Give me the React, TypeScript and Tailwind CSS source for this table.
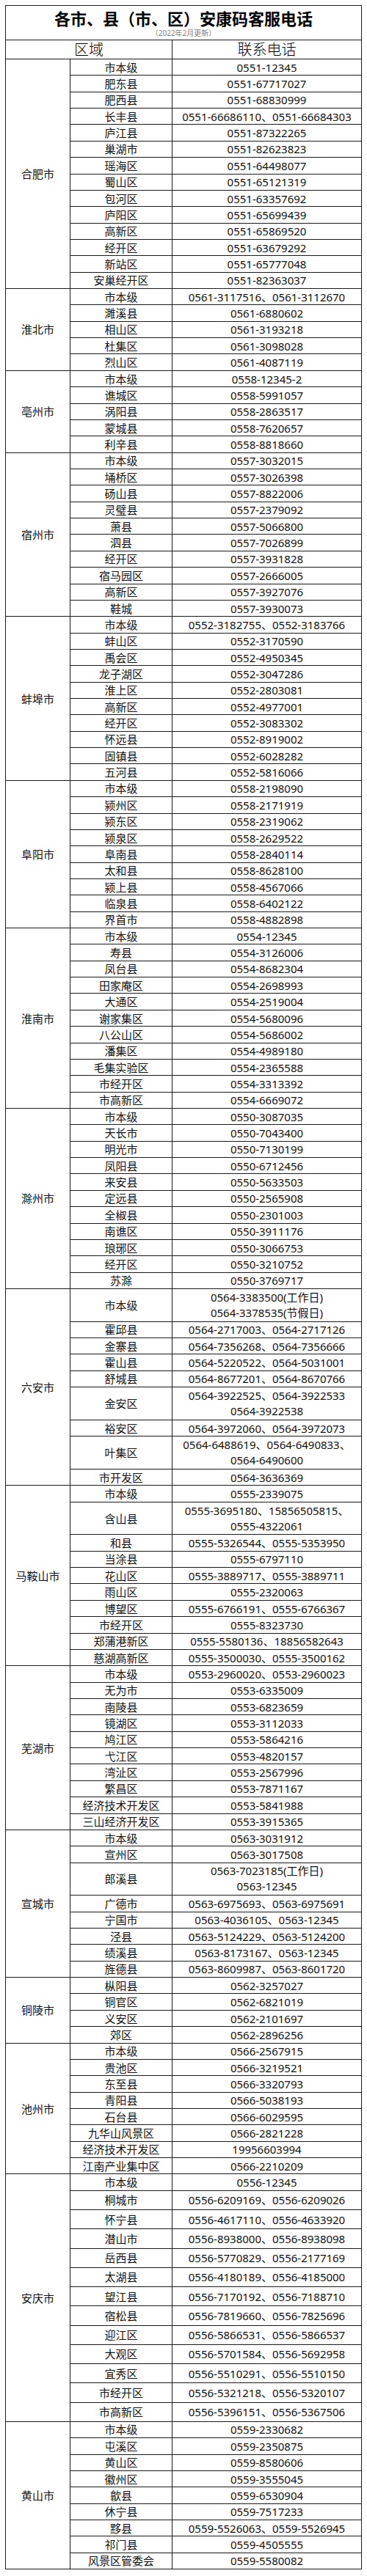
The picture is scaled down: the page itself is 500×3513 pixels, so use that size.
type Phone = string | string[];
type Row = [string, Phone];

interface Group {
  city: string;
  rows: Row[];
  // rows from this index on are drawn a bit taller (安庆 block)
  tallFrom?: number;
}

const GROUPS: Group[] = [
  {
    city: "合肥市",
    rows: [
      ["市本级", "0551-12345"],
      ["肥东县", "0551-67717027"],
      ["肥西县", "0551-68830999"],
      ["长丰县", "0551-66686110、0551-66684303"],
      ["庐江县", "0551-87322265"],
      ["巢湖市", "0551-82623823"],
      ["瑶海区", "0551-64498077"],
      ["蜀山区", "0551-65121319"],
      ["包河区", "0551-63357692"],
      ["庐阳区", "0551-65699439"],
      ["高新区", "0551-65869520"],
      ["经开区", "0551-63679292"],
      ["新站区", "0551-65777048"],
      ["安巢经开区", "0551-82363037"],
    ],
  },
  {
    city: "淮北市",
    rows: [
      ["市本级", "0561-3117516、0561-3112670"],
      ["濉溪县", "0561-6880602"],
      ["相山区", "0561-3193218"],
      ["杜集区", "0561-3098028"],
      ["烈山区", "0561-4087119"],
    ],
  },
  {
    city: "亳州市",
    rows: [
      ["市本级", "0558-12345-2"],
      ["谯城区", "0558-5991057"],
      ["涡阳县", "0558-2863517"],
      ["蒙城县", "0558-7620657"],
      ["利辛县", "0558-8818660"],
    ],
  },
  {
    city: "宿州市",
    rows: [
      ["市本级", "0557-3032015"],
      ["埇桥区", "0557-3026398"],
      ["砀山县", "0557-8822006"],
      ["灵璧县", "0557-2379092"],
      ["萧县", "0557-5066800"],
      ["泗县", "0557-7026899"],
      ["经开区", "0557-3931828"],
      ["宿马园区", "0557-2666005"],
      ["高新区", "0557-3927076"],
      ["鞋城", "0557-3930073"],
    ],
  },
  {
    city: "蚌埠市",
    rows: [
      ["市本级", "0552-3182755、0552-3183766"],
      ["蚌山区", "0552-3170590"],
      ["禹会区", "0552-4950345"],
      ["龙子湖区", "0552-3047286"],
      ["淮上区", "0552-2803081"],
      ["高新区", "0552-4977001"],
      ["经开区", "0552-3083302"],
      ["怀远县", "0552-8919002"],
      ["固镇县", "0552-6028282"],
      ["五河县", "0552-5816066"],
    ],
  },
  {
    city: "阜阳市",
    rows: [
      ["市本级", "0558-2198090"],
      ["颍州区", "0558-2171919"],
      ["颍东区", "0558-2319062"],
      ["颍泉区", "0558-2629522"],
      ["阜南县", "0558-2840114"],
      ["太和县", "0558-8628100"],
      ["颍上县", "0558-4567066"],
      ["临泉县", "0558-6402122"],
      ["界首市", "0558-4882898"],
    ],
  },
  {
    city: "淮南市",
    rows: [
      ["市本级", "0554-12345"],
      ["寿县", "0554-3126006"],
      ["凤台县", "0554-8682304"],
      ["田家庵区", "0554-2698993"],
      ["大通区", "0554-2519004"],
      ["谢家集区", "0554-5680096"],
      ["八公山区", "0554-5686002"],
      ["潘集区", "0554-4989180"],
      ["毛集实验区", "0554-2365588"],
      ["市经开区", "0554-3313392"],
      ["市高新区", "0554-6669072"],
    ],
  },
  {
    city: "滁州市",
    rows: [
      ["市本级", "0550-3087035"],
      ["天长市", "0550-7043400"],
      ["明光市", "0550-7130199"],
      ["凤阳县", "0550-6712456"],
      ["来安县", "0550-5633503"],
      ["定远县", "0550-2565908"],
      ["全椒县", "0550-2301003"],
      ["南谯区", "0550-3911176"],
      ["琅琊区", "0550-3066753"],
      ["经开区", "0550-3210752"],
      ["苏滁", "0550-3769717"],
    ],
  },
  {
    city: "六安市",
    rows: [
      ["市本级", ["0564-3383500(工作日)", "0564-3378535(节假日)"]],
      ["霍邱县", "0564-2717003、0564-2717126"],
      ["金寨县", "0564-7356268、0564-7356666"],
      ["霍山县", "0564-5220522、0564-5031001"],
      ["舒城县", "0564-8677201、0564-8670766"],
      ["金安区", ["0564-3922525、0564-3922533", "0564-3922538"]],
      ["裕安区", "0564-3972060、0564-3972073"],
      ["叶集区", ["0564-6488619、0564-6490833、", "0564-6490600"]],
      ["市开发区", "0564-3636369"],
    ],
  },
  {
    city: "马鞍山市",
    rows: [
      ["市本级", "0555-2339075"],
      ["含山县", ["0555-3695180、15856505815、", "0555-4322061"]],
      ["和县", "0555-5326544、0555-5353950"],
      ["当涂县", "0555-6797110"],
      ["花山区", "0555-3889717、0555-3889711"],
      ["雨山区", "0555-2320063"],
      ["博望区", "0555-6766191、0555-6766367"],
      ["市经开区", "0555-8323730"],
      ["郑蒲港新区", "0555-5580136、18856582643"],
      ["慈湖高新区", "0555-3500030、0555-3500162"],
    ],
  },
  {
    city: "芜湖市",
    rows: [
      ["市本级", "0553-2960020、0553-2960023"],
      ["无为市", "0553-6335009"],
      ["南陵县", "0553-6823659"],
      ["镜湖区", "0553-3112033"],
      ["鸠江区", "0553-5864216"],
      ["弋江区", "0553-4820157"],
      ["湾沚区", "0553-2567996"],
      ["繁昌区", "0553-7871167"],
      ["经济技术开发区", "0553-5841988"],
      ["三山经济开发区", "0553-3915365"],
    ],
  },
  {
    city: "宣城市",
    rows: [
      ["市本级", "0563-3031912"],
      ["宣州区", "0563-3017508"],
      ["郎溪县", ["0563-7023185(工作日)", "0563-12345"]],
      ["广德市", "0563-6975693、0563-6975691"],
      ["宁国市", "0563-4036105、0563-12345"],
      ["泾县", "0563-5124229、0563-5124200"],
      ["绩溪县", "0563-8173167、0563-12345"],
      ["旌德县", "0563-8609987、0563-8601720"],
    ],
  },
  {
    city: "铜陵市",
    rows: [
      ["枞阳县", "0562-3257027"],
      ["铜官区", "0562-6821019"],
      ["义安区", "0562-2101697"],
      ["郊区", "0562-2896256"],
    ],
  },
  {
    city: "池州市",
    rows: [
      ["市本级", "0566-2567915"],
      ["贵池区", "0566-3219521"],
      ["东至县", "0566-3320793"],
      ["青阳县", "0566-5038193"],
      ["石台县", "0566-6029595"],
      ["九华山风景区", "0566-2821228"],
      ["经济技术开发区", "19956603994"],
      ["江南产业集中区", "0566-2210209"],
    ],
  },
  {
    city: "安庆市",
    tallFrom: 1,
    rows: [
      ["市本级", "0556-12345"],
      ["桐城市", "0556-6209169、0556-6209026"],
      ["怀宁县", "0556-4617110、0556-4633920"],
      ["潜山市", "0556-8938000、0556-8938098"],
      ["岳西县", "0556-5770829、0556-2177169"],
      ["太湖县", "0556-4180189、0556-4185000"],
      ["望江县", "0556-7170192、0556-7188710"],
      ["宿松县", "0556-7819660、0556-7825696"],
      ["迎江区", "0556-5866531、0556-5866537"],
      ["大观区", "0556-5701584、0556-5692958"],
      ["宜秀区", "0556-5510291、0556-5510150"],
      ["市经开区", "0556-5321218、0556-5320107"],
      ["市高新区", "0556-5396151、0556-5367506"],
    ],
  },
  {
    city: "黄山市",
    rows: [
      ["市本级", "0559-2330682"],
      ["屯溪区", "0559-2350875"],
      ["黄山区", "0559-8580606"],
      ["徽州区", "0559-3555045"],
      ["歙县", "0559-6530904"],
      ["休宁县", "0559-7517233"],
      ["黟县", "0559-5526063、0559-5526945"],
      ["祁门县", "0559-4505555"],
      ["风景区管委会", "0559-5580082"],
    ],
  },
];

const cell = "border border-[#1a1a1a] p-0 text-center align-middle";

function rowHeight(phone: Phone, tall: boolean) {
  if (Array.isArray(phone)) return "h-[44.74px]";
  return tall ? "h-[26.25px]" : "h-[22.37px]";
}

export default function App() {
  return (
    <div className="bg-white min-h-[3513px] pt-[7px] pl-[7px]">
      <table className="w-[486px] table-fixed border-collapse text-[15px] leading-[20px] text-[#111] font-['Noto_Sans','Noto_Sans_CJK_SC',sans-serif]">
        <colgroup>
          <col className="w-[88px]" />
          <col className="w-[139px]" />
          <col />
        </colgroup>
        <tbody>
          <tr className="h-[47px]">
            <td colSpan={3} className={cell}>
              <div className="pt-[2px] text-[22px] font-bold leading-[26px] text-black">
                各市、县（市、区）安康码客服电话
              </div>
              <div className="text-[10px] leading-[14px] text-[#7f7f7f]">（2022年2月更新）</div>
            </td>
          </tr>
          <tr className="h-[26px]">
            <td colSpan={2} className={`${cell} text-[20px] leading-[24px] font-light text-black`}>
              区域
            </td>
            <td className={`${cell} text-[20px] leading-[24px] font-light text-black`}>联系电话</td>
          </tr>
          {GROUPS.map((g) =>
            g.rows.map(([area, phone], i) => {
              const tall = g.tallFrom !== undefined && i >= g.tallFrom;
              return (
                <tr key={g.city + area + i} className={rowHeight(phone, tall)}>
                  {i === 0 && (
                    <td rowSpan={g.rows.length} className={cell}>
                      {g.city}
                    </td>
                  )}
                  <td className={`${cell} whitespace-nowrap`}>{area}</td>
                  <td className={`${cell} whitespace-nowrap`}>
                    {Array.isArray(phone)
                      ? phone.map((p) => (
                          <div key={p} className="leading-[21px]">
                            {p}
                          </div>
                        ))
                      : phone}
                  </td>
                </tr>
              );
            })
          )}
        </tbody>
      </table>
    </div>
  );
}
